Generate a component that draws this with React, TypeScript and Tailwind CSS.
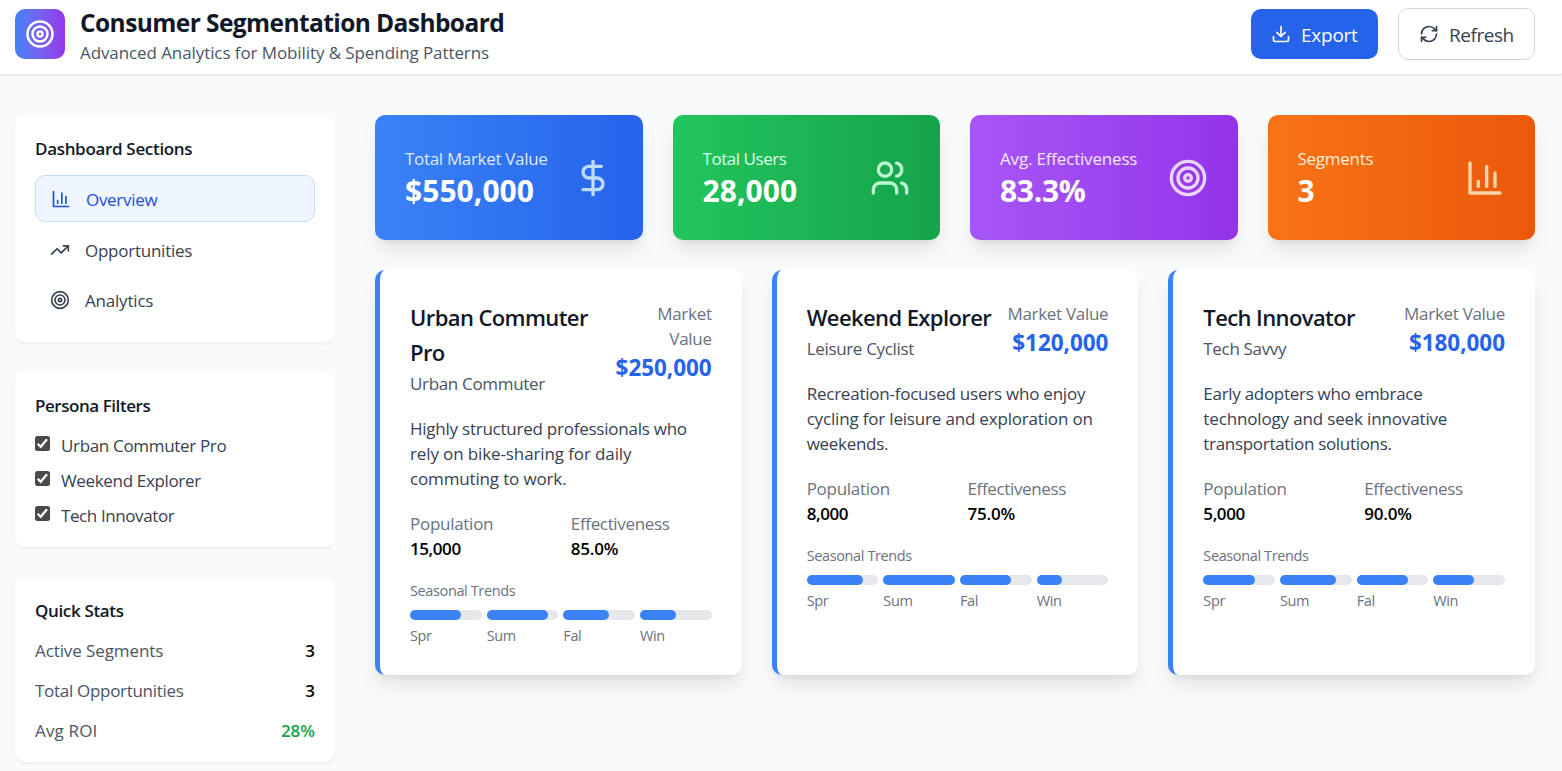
import React from 'react';
import clsx from 'clsx';

function Icon({ className, children }: { className?: string; children: React.ReactNode }) {
  return (
    <svg
      viewBox="0 0 24 24"
      fill="none"
      stroke="currentColor"
      strokeWidth="2"
      strokeLinecap="round"
      strokeLinejoin="round"
      className={clsx('shrink-0', className)}
    >
      {children}
    </svg>
  );
}

type IconProps = { className?: string };

const TargetIcon = ({ className }: IconProps) => (
  <Icon className={className}>
    <circle cx="12" cy="12" r="10" />
    <circle cx="12" cy="12" r="6" />
    <circle cx="12" cy="12" r="2" />
  </Icon>
);

const BarChartIcon = ({ className }: IconProps) => (
  <Icon className={className}>
    <path d="M3 3v18h18" />
    <path d="M18 17V9" />
    <path d="M13 17V5" />
    <path d="M8 17v-3" />
  </Icon>
);

const TrendingUpIcon = ({ className }: IconProps) => (
  <Icon className={className}>
    <polyline points="22 7 13.5 15.5 8.5 10.5 2 17" />
    <polyline points="16 7 22 7 22 13" />
  </Icon>
);

const DownloadIcon = ({ className }: IconProps) => (
  <Icon className={className}>
    <path d="M21 15v4a2 2 0 0 1-2 2H5a2 2 0 0 1-2-2v-4" />
    <polyline points="7 10 12 15 17 10" />
    <line x1="12" x2="12" y1="15" y2="3" />
  </Icon>
);

const RefreshIcon = ({ className }: IconProps) => (
  <Icon className={className}>
    <path d="M3 12a9 9 0 0 1 9-9 9.75 9.75 0 0 1 6.74 2.74L21 8" />
    <path d="M21 3v5h-5" />
    <path d="M21 12a9 9 0 0 1-9 9 9.75 9.75 0 0 1-6.74-2.74L3 16" />
    <path d="M8 16H3v5" />
  </Icon>
);

const DollarIcon = ({ className }: IconProps) => (
  <Icon className={className}>
    <line x1="12" x2="12" y1="2" y2="22" />
    <path d="M17 5H9.5a3.5 3.5 0 0 0 0 7h5a3.5 3.5 0 0 1 0 7H6" />
  </Icon>
);

const UsersIcon = ({ className }: IconProps) => (
  <Icon className={className}>
    <path d="M16 21v-2a4 4 0 0 0-4-4H6a4 4 0 0 0-4 4v2" />
    <circle cx="9" cy="7" r="4" />
    <path d="M22 21v-2a4 4 0 0 0-3-3.87" />
    <path d="M16 3.13a4 4 0 0 1 0 7.75" />
  </Icon>
);

const navItems = [
  { label: 'Overview', icon: BarChartIcon, active: true, tracking: 'tracking-[-0.3px]' },
  { label: 'Opportunities', icon: TrendingUpIcon, active: false, tracking: 'tracking-[-0.25px]' },
  { label: 'Analytics', icon: TargetIcon, active: false, tracking: 'tracking-[-0.2px]' },
];

const filters = [
  { label: 'Urban Commuter Pro', tracking: 'tracking-[-0.33px]' },
  { label: 'Weekend Explorer', tracking: 'tracking-[-0.34px]' },
  { label: 'Tech Innovator', tracking: 'tracking-[-0.4px]' },
];

const quickStats = [
  { label: 'Active Segments', value: '3', color: 'text-black', tracking: 'tracking-[-0.1px]' },
  { label: 'Total Opportunities', value: '3', color: 'text-black', tracking: 'tracking-[-0.3px]' },
  { label: 'Avg ROI', value: '28%', color: 'text-[#16a34a]', tracking: 'tracking-[0.15px]' },
];

const metrics = [
  {
    label: 'Total Market Value',
    value: '$550,000',
    icon: DollarIcon,
    bg: 'from-[#3b82f6] to-[#2563eb]',
    labelClass: 'text-[#dbeafe] tracking-[-0.32px]',
    valueClass: 'tracking-[0.05px]',
    iconClass: 'text-[#bfdbfe]',
  },
  {
    label: 'Total Users',
    value: '28,000',
    icon: UsersIcon,
    bg: 'from-[#22c55e] to-[#16a34a]',
    labelClass: 'text-[#dcfce7] tracking-[-0.45px]',
    valueClass: 'tracking-[0.05px]',
    iconClass: 'text-[#bbf7d0]',
  },
  {
    label: 'Avg. Effectiveness',
    value: '83.3%',
    icon: TargetIcon,
    bg: 'from-[#a855f7] to-[#9333ea]',
    labelClass: 'text-[#f3e8ff] tracking-[-0.18px]',
    valueClass: 'tracking-[-0.3px]',
    iconClass: 'text-[#e9d5ff]',
  },
  {
    label: 'Segments',
    value: '3',
    icon: BarChartIcon,
    bg: 'from-[#f97316] to-[#ea580c]',
    labelClass: 'text-[#ffedd5] tracking-[-0.28px]',
    valueClass: 'tracking-[0px]',
    iconClass: 'text-[#fed7aa]',
  },
];

const personas = [
  {
    name: ['Urban Commuter', 'Pro'],
    type: 'Urban Commuter',
    marketLabel: ['Market', 'Value'],
    marketValue: '$250,000',
    description: [
      { text: 'Highly structured professionals who', tracking: 'tracking-[-0.24px]' },
      { text: 'rely on bike-sharing for daily', tracking: 'tracking-[-0.12px]' },
      { text: 'commuting to work.', tracking: 'tracking-[-0.15px]' },
    ],
    population: '15,000',
    effectiveness: '85.0%',
    trends: [1.0, 1.2, 0.9, 0.7],
  },
  {
    name: ['Weekend Explorer'],
    type: 'Leisure Cyclist',
    marketLabel: ['Market Value'],
    marketValue: '$120,000',
    description: [
      { text: 'Recreation-focused users who enjoy', tracking: 'tracking-[-0.23px]' },
      { text: 'cycling for leisure and exploration on', tracking: 'tracking-[-0.18px]' },
      { text: 'weekends.', tracking: 'tracking-[-0.3px]' },
    ],
    population: '8,000',
    effectiveness: '75.0%',
    trends: [1.1, 1.4, 1.0, 0.5],
  },
  {
    name: ['Tech Innovator'],
    type: 'Tech Savvy',
    marketLabel: ['Market Value'],
    marketValue: '$180,000',
    description: [
      { text: 'Early adopters who embrace', tracking: 'tracking-[-0.29px]' },
      { text: 'technology and seek innovative', tracking: 'tracking-[-0.15px]' },
      { text: 'transportation solutions.', tracking: 'tracking-[-0.31px]' },
    ],
    population: '5,000',
    effectiveness: '90.0%',
    trends: [1.0, 1.1, 1.0, 0.8],
  },
];

const seasons = ['Spr', 'Sum', 'Fal', 'Win'];
const PEAK_TREND = 1.4;

function Panel({ title, titleClass, children }: { title: string; titleClass: string; children: React.ReactNode }) {
  return (
    <section className="rounded-[10px] bg-white p-5 shadow-[0_1.25px_2.5px_0_rgba(0,0,0,0.05)]">
      <h3 className={clsx('mb-[15px] translate-y-px font-semibold text-[#111827]', titleClass)}>{title}</h3>
      {children}
    </section>
  );
}

function Checkbox() {
  return (
    <span className="mb-[2px] flex size-[15px] items-center justify-center rounded-[2.5px] bg-[#4a4a4a]">
      <svg viewBox="0 0 15 15" className="size-[15px]" fill="none" stroke="white" strokeWidth="2.3">
        <path d="M2.7 7.7 L5.7 10.7 L12 3.3" />
      </svg>
    </span>
  );
}

function Sidebar() {
  return (
    <aside className="flex w-80 shrink-0 flex-col gap-[30px]">
      <Panel title="Dashboard Sections" titleClass="tracking-[-0.32px]">
        <nav className="flex flex-col gap-[5px]">
          {navItems.map(({ label, icon: NavIcon, active, tracking }) => (
            <button
              key={label}
              className={clsx(
                'flex items-center gap-[15px] rounded-[10px] px-[15px] py-2.5 text-left',
                active ? 'border border-[#bfdbfe] bg-[#eff6ff] text-[#1d4ed8]' : 'text-[#374151]',
              )}
            >
              <NavIcon className="size-5" />
              <span className={clsx('translate-y-px', tracking)}>{label}</span>
            </button>
          ))}
        </nav>
      </Panel>
      <Panel title="Persona Filters" titleClass="tracking-[-0.45px]">
        <div className="flex flex-col gap-2.5">
          {filters.map(({ label, tracking }) => (
            <label key={label} className="flex items-center gap-[11px] text-[#374151]">
              <Checkbox />
              <span className={clsx('translate-y-px', tracking)}>{label}</span>
            </label>
          ))}
        </div>
      </Panel>
      <Panel title="Quick Stats" titleClass="tracking-[-0.35px]">
        <dl className="flex flex-col gap-[15px]">
          {quickStats.map(({ label, value, color, tracking }) => (
            <div key={label} className="flex translate-y-px justify-between">
              <dt className={clsx('text-[#4b5563]', tracking)}>{label}</dt>
              <dd className={clsx('font-semibold', color)}>{value}</dd>
            </div>
          ))}
        </dl>
      </Panel>
    </aside>
  );
}

const cardShadow = 'shadow-[0_12.5px_18.75px_-3.75px_rgba(0,0,0,0.1),0_5px_7.5px_-5px_rgba(0,0,0,0.1)]';

function PersonaCard({ persona }: { persona: (typeof personas)[number] }) {
  return (
    <article className={clsx('rounded-[10px] border-l-5 border-[#3b82f6] bg-white p-[30px]', cardShadow)}>
      <div className="mb-5 flex items-start justify-between">
        <div>
          <h3 className="text-[22px] leading-[35px] font-semibold tracking-[-0.6px] whitespace-nowrap text-[#111827]">
            {persona.name.map((line) => (
              <span key={line} className="block">{line}</span>
            ))}
          </h3>
          <p className="translate-y-px tracking-[-0.33px] text-[#4b5563]">{persona.type}</p>
        </div>
        <div className="text-right">
          <div className="translate-y-px tracking-[-0.3px] whitespace-nowrap text-[#6b7280]">
            {persona.marketLabel.map((line) => (
              <span key={line} className="block">{line}</span>
            ))}
          </div>
          <div className="text-[22.5px] leading-[35px] font-bold tracking-[-0.05px] text-[#2563eb]">
            {persona.marketValue}
          </div>
        </div>
      </div>
      <p className="mb-5 translate-y-px whitespace-nowrap text-[#374151]">
        {persona.description.map(({ text, tracking }) => (
          <span key={text} className={clsx('block', tracking)}>{text}</span>
        ))}
      </p>
      <div className="mb-5 grid translate-y-px grid-cols-2 gap-5">
        <div>
          <div className="tracking-[-0.28px] text-[#6b7280]">Population</div>
          <div className="font-semibold tracking-[-0.42px] text-black">{persona.population}</div>
        </div>
        <div>
          <div className="tracking-[-0.35px] text-[#6b7280]">Effectiveness</div>
          <div className="font-semibold tracking-[-0.2px] text-black">{persona.effectiveness}</div>
        </div>
      </div>
      <div className="text-[14.5px] leading-5 tracking-[-0.38px] text-[#6b7280]">
        <div className="mb-2.5 translate-y-px">Seasonal Trends</div>
        <div className="grid grid-cols-4 gap-[5px]">
          {seasons.map((season, i) => (
            <div key={season}>
              <div className="mb-[5px] h-2.5 rounded-full bg-[#e5e7eb]">
                <div
                  className="h-2.5 rounded-full bg-[#3b82f6]"
                  style={{ width: `${(persona.trends[i] / PEAK_TREND) * 100}%` }}
                />
              </div>
              <div className="translate-y-px">{season}</div>
            </div>
          ))}
        </div>
      </div>
    </article>
  );
}

export default function App() {
  return (
    <div className="h-[771px] overflow-hidden bg-[#f9fafb] font-['Open_Sans','Noto_Sans',sans-serif] text-[17px] leading-[25px]">
      <header className="flex h-[75px] items-start justify-between border-b border-[#e5e7eb] bg-white pt-1 pr-[27px] pl-[15px] shadow-[0_1.25px_2.5px_0_rgba(0,0,0,0.05)]">
        <div className="flex items-center gap-[15px]">
          <div className="flex size-[50px] items-center justify-center rounded-[10px] bg-linear-to-r from-[#3b82f6] to-[#9333ea] text-white">
            <TargetIcon className="size-[30px]" />
          </div>
          <div className="translate-y-px">
            <h1 className="text-[24.5px] leading-[35px] font-bold tracking-[-0.58px] text-[#111827]">
              Consumer Segmentation Dashboard
            </h1>
            <p className="tracking-[-0.09px] text-[#4b5563]">Advanced Analytics for Mobility &amp; Spending Patterns</p>
          </div>
        </div>
        <div className="flex h-[60px] items-center gap-5 text-[19px] leading-[30px]">
          <button className="flex h-[50px] w-[127px] items-center gap-2.5 rounded-[10px] bg-[#2563eb] px-5 tracking-[-0.25px] text-white">
            <DownloadIcon className="size-5" />
            <span className="translate-y-px">Export</span>
          </button>
          <button className="flex h-[52px] w-[137px] items-center gap-2.5 rounded-[10px] border border-[#d1d5db] px-5 tracking-[-0.45px] text-[#374151]">
            <RefreshIcon className="size-5" />
            <span className="translate-y-px">Refresh</span>
          </button>
        </div>
      </header>
      <div className="flex gap-10 pt-10 pr-[27px] pl-[15px]">
        <Sidebar />
        <main className="flex min-w-0 flex-1 flex-col gap-[30px]">
          <div className="grid grid-cols-4 gap-[30px]">
            {metrics.map(({ label, value, icon: MetricIcon, bg, labelClass, valueClass, iconClass }) => (
              <div
                key={label}
                className={clsx('flex items-center justify-between rounded-[10px] bg-linear-to-r p-[30px]', bg, cardShadow)}
              >
                <div className="translate-y-px whitespace-nowrap">
                  <div className={labelClass}>{label}</div>
                  <div className={clsx('text-[30px] leading-10 font-bold text-white', valueClass)}>{value}</div>
                </div>
                <MetricIcon className={clsx('size-10', iconClass)} />
              </div>
            ))}
          </div>
          <div className="grid grid-cols-3 gap-[30px]">
            {personas.map((persona) => (
              <PersonaCard key={persona.type} persona={persona} />
            ))}
          </div>
        </main>
      </div>
    </div>
  );
}
